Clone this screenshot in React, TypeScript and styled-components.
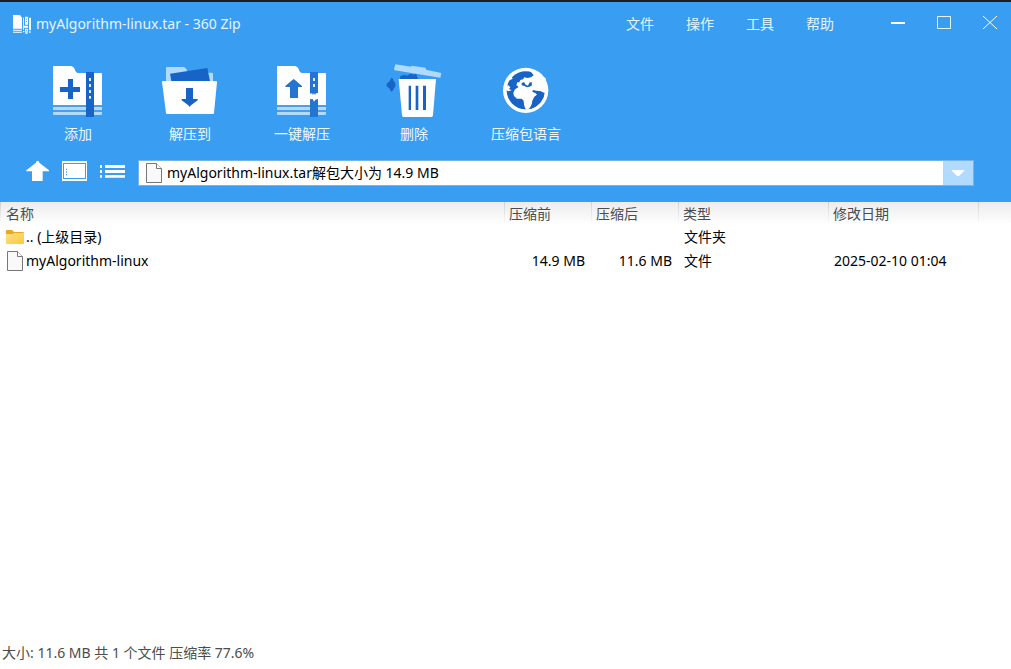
import React from "react";
import styled, { createGlobalStyle } from "styled-components";

const BLUE = "#399df2";
const DEEP = "#1763c6";
const PALE = "#b0dbff";

const GlobalStyle = createGlobalStyle`
  * { box-sizing: border-box; }
  html, body, #root { height: 100%; }
  body {
    margin: 0;
    background: #fff;
    font-family: "Noto Sans", "Noto Sans CJK SC", sans-serif;
    font-size: 14px;
    color: #000;
  }
  button, input { font: inherit; }
`;

const Window = styled.div`
  display: flex;
  flex-direction: column;
  min-height: 100%;
  border-top: 2px solid #1c1f22;
`;

const Header = styled.header`
  background: ${BLUE};
  color: #fff;
  padding-bottom: 16px;
`;

const TitleBar = styled.div`
  display: flex;
  align-items: center;
  height: 44px;
  padding-left: 12px;
`;

const Title = styled.h1`
  flex: 1;
  margin: 0 0 0 4px;
  font-size: 14px;
  font-weight: 400;
  line-height: 20px;
  color: #e6f4ff;
  white-space: nowrap;
`;

const FlatButton = styled.button`
  display: flex;
  align-items: center;
  justify-content: center;
  border: 0;
  padding: 0;
  background: transparent;
  color: inherit;
  cursor: pointer;
`;

const MenuBar = styled.nav`
  display: flex;
  margin-right: 25px;
`;

const MenuButton = styled(FlatButton)`
  height: 44px;
  padding: 0 16px 2px;
  color: #e6f4ff;
  white-space: nowrap;
`;

const WindowControls = styled.div`
  display: flex;
  gap: 2px;
`;

const WindowButton = styled(FlatButton)`
  width: 44px;
  height: 44px;
`;

const Toolbar = styled.div`
  display: flex;
  padding: 16px 0 14px 22px;
`;

const ToolButton = styled(FlatButton)`
  flex-direction: column;
  gap: 4px;
  width: 112px;
  line-height: 24px;
  color: #eef8ff;
  white-space: nowrap;
`;

const AddressRow = styled.div`
  display: flex;
  gap: 12px;
  padding: 0 37px 0 26px;
`;

const AddressField = styled.div`
  display: flex;
  flex: 1;
  align-items: center;
  height: 26px;
  padding-left: 6px;
  border: 1px solid #76b4e8;
  background: #fff;
`;

const AddressInput = styled.input`
  flex: 1;
  min-width: 0;
  height: 24px;
  margin-left: 4px;
  padding: 0 0 2px;
  border: 0;
  outline: 0;
  background: transparent;
  color: #000;
`;

const DropButton = styled(FlatButton)`
  width: 30px;
  height: 24px;
  background: ${PALE};
`;

const Main = styled.main`
  flex: 1;
`;

const FileTable = styled.table`
  width: 100%;
  table-layout: fixed;
  border-collapse: collapse;
`;

const HeadRow = styled.tr`
  height: 23px;
  background: linear-gradient(#ececec, #fff);
`;

const HeadCell = styled.th`
  padding: 0 0 0 5px;
  background: linear-gradient(#cfcfcf, #fff) left / 1px 100% no-repeat;
  font-weight: 400;
  line-height: 23px;
  text-align: left;
  color: #4c4c4c;
  white-space: nowrap;

  &:first-child {
    padding-left: 6px;
  }
`;

const Cell = styled.td<{ $align?: "right" }>`
  height: 24px;
  padding: 0 6px;
  line-height: 24px;
  text-align: ${(p) => p.$align ?? "left"};
  white-space: nowrap;
`;

const NameLabel = styled.span`
  display: flex;
  align-items: center;
  gap: 2px;
`;

const StatusBar = styled.footer`
  padding: 0 2px 4px;
  line-height: 24px;
  color: #4c4c4c;
`;

const Column = styled.col<{ $width?: number }>`
  width: ${(p) => (p.$width ? `${p.$width}px` : "auto")};
`;

const LogoIcon = () => (
  <svg width="20" height="22" viewBox="36 36 60 66" aria-hidden="true">
    <path fill="#fff" d="M39 42h21l6 8v33H39zM39 86h27v3H39zM39 92h27v3H39zM69 50h3v36h-3zM75 47h9v24h-9zM87 50h6v38h-6zM72 74h12v6H72zM75 83h9v9h-9zM69 90h4v4h-4zM87 91h5v4h-5zM76 94h7v4h-7z" />
    <path fill={BLUE} d="M78 53h3v3h-3zM78 60h3v3h-3zM78 86h3v3h-3z" />
  </svg>
);

const AddIcon = () => (
  <svg width="56" height="56" viewBox="60 36 168 168" aria-hidden="true">
    <path fill="#fff" d="M69 50q0-2 2-2h54l7 5 6 13 5 3h70q3 0 3 3v93H69z" />
    <path fill={PALE} d="M69 171h147v9H69zM69 186h147v6q0 3-3 3H72q-3 0-3-3z" />
    <path fill="#4b9ee8" d="M69 165h147v6H69zM69 180h147v6H69z" />
    <path fill={DEEP} d="M168 66h24v135h-24zM114 87h15v24h21v15h-21v21h-15v-21H90v-15h24z" />
    <path fill="#d8eeff" d="M177 84h6v9h-6zM177 102h6v9h-6zM177 120h6v9h-6zM177 138h6v8h-6z" />
  </svg>
);

const ExtractIcon = () => (
  <svg width="56" height="56" viewBox="396 36 168 168" aria-hidden="true">
    <path fill={PALE} d="M408 54q0-3 3-3h51l7 5 4 12h73q3 0 3 3v24H408z" />
    <path fill={DEEP} d="M420 71l112-17 8 39H424z" />
    <path fill="#fff" d="M396 96q0-3 3-3h159q3 0 3 3l-9 93q0 3-3 3H411q-3 0-3-3z" />
    <path fill={DEEP} d="M468 114h21v33h14v4l-20 15-4 5-4-5-20-15v-4h13z" />
  </svg>
);

const OneKeyIcon = () => (
  <svg width="56" height="56" viewBox="42 36 168 168" aria-hidden="true">
    <path fill="#fff" d="M51 50q0-2 2-2h54l7 5 6 13 5 3h70q3 0 3 3v93H51z" />
    <path fill={PALE} d="M51 171h147v9H51zM51 186h147v6q0 3-3 3H54q-3 0-3-3z" />
    <path fill="#4b9ee8" d="M51 165h147v6H51zM51 180h147v6H51z" />
    <path fill="#2475d2" d="M150 66h24v63l-6 1-3 5-3-6-3 6-3-5-6 1zM150 148l8-1 4 8 4-6 8-2v54h-24zM101 87l4 3 21 18v3h-12v33H90v-33H76v-3l21-18z" />
    <path fill="#d8eeff" d="M159 84h6v9h-6zM159 102h6v9h-6z" />
  </svg>
);

const DeleteIcon = () => (
  <svg width="56" height="56" viewBox="378 36 168 168" aria-hidden="true">
    <path fill={DEEP} d="M394 83l4 2 3 8 5 6v10l-5 7-3 7-5 2-4-9-9-7v-8l9-7zM420 87l1-9 12-4 7 3 12-6 8 3 8-3 3 7 3 9z" />
    <path fill={PALE} d="M406 43l47 7 2-3 42 6 1 6 46 10-3 14-137-22-2-3z" />
    <path fill="#fff" d="M416 87h112l-9 108q0 6-6 6h-82q-5 0-5-6z" />
    <path fill={DEEP} d="M446 107h7v73h-7zM467 107h8v73h-8zM489 107h9v73h-9z" />
  </svg>
);

const GlobeIcon = () => (
  <svg width="56" height="56" viewBox="9 6 168 168" aria-hidden="true">
    <circle cx="92" cy="91" r="68" fill="#fff" />
    <circle cx="92" cy="91" r="57" fill={DEEP} />
    <path
      fill="#fff"
      d="M106 32L152 54L156 98L145 98L138 94L124 92L114 90L112 95L122 100L126 104L118 110L112 122L110 134L104 144L96 150L90 144L87 134L86 122L80 116L66 116L57 108L55 98L60 88L70 82L68 78L64 76L67 67L73 67L76 60L84 58L88 52L98 54L108 52L116 46Z"
    />
    <path fill={DEEP} d="M80 69L87 66L92 74L99 77L103 68L110 66L111 76L104 80L96 82L88 78L80 76Z" />
    <path fill={DEEP} d="M124 94L138 96L148 99L146 112L136 128L122 140L106 148L110 134L118 114L128 104Z" />
    <path fill="#fff" d="M32 78L40 76L46 82L42 87L50 91L40 94L33 90ZM43 54L50 50L53 56L46 60Z" />
  </svg>
);

const UpIcon = () => (
  <svg width="24" height="26" viewBox="78 30 72 78" aria-hidden="true">
    <path fill="#fff" d="M110 33h6l2 5 29 23v3h-19v29H96V64H79v-3l29-23z" />
  </svg>
);

const ViewIcon = () => (
  <svg width="26" height="26" viewBox="186 30 78 78" aria-hidden="true">
    <path fill="#fff" d="M186 33h75v60h-75z" />
    <path fill={BLUE} d="M189 39h69v3h-69zM189 84h69v3h-69zM189 39h3v48h-3zM255 39h3v48h-3zM198 56h3v4h-3zM198 64h3v4h-3zM198 72h3v4h-3z" />
  </svg>
);

const ListIcon = () => (
  <svg width="26" height="26" viewBox="300 30 78 78" aria-hidden="true">
    <path fill="#fff" d="M300 45h6v9h-6zM300 60h6v9h-6zM300 75h6v8h-6zM315 45h60v9h-60zM315 60h60v9h-60zM315 75h60v8h-60z" />
  </svg>
);

const FileIcon = () => (
  <svg width="18" height="20" viewBox="-1 0 18 20" aria-hidden="true">
    <path fill="#f9f9f9" stroke="#777" d="M.5.5h10l5 5v14H.5z" />
    <path fill="#fff" stroke="#777" d="M10.500.5v5h5" />
  </svg>
);

const FolderIcon = () => (
  <svg width="18" height="16" viewBox="0 0 18 16" aria-hidden="true">
    <defs>
      <linearGradient id="folder" x1="0" y1="0" x2="1" y2="1">
        <stop offset="0" stopColor="#ffe08a" />
        <stop offset="1" stopColor="#fbc937" />
      </linearGradient>
    </defs>
    <path fill="#e8a820" d="M0 2q0-1 1-1h5l2 2h9q1 0 1 1v3H0z" />
    <path fill="url(#folder)" d="M0 5h7l1-1h10v10q0 1-1 1H1q-1 0-1-1z" />
  </svg>
);

const menus = ["文件", "操作", "工具", "帮助"];

const tools = [
  { label: "添加", Icon: AddIcon },
  { label: "解压到", Icon: ExtractIcon },
  { label: "一键解压", Icon: OneKeyIcon },
  { label: "删除", Icon: DeleteIcon },
  { label: "压缩包语言", Icon: GlobeIcon },
];

const columns = [
  { label: "名称", width: 504 },
  { label: "压缩前", width: 87 },
  { label: "压缩后", width: 87 },
  { label: "类型", width: 150 },
  { label: "修改日期", width: 150 },
];

const files = [
  { name: ".. (上级目录)", Icon: FolderIcon, size: "", packed: "", type: "文件夹", date: "" },
  { name: "myAlgorithm-linux", Icon: FileIcon, size: "14.9 MB", packed: "11.6 MB", type: "文件", date: "2025-02-10 01:04" },
];

export default function App() {
  return (
    <Window>
      <GlobalStyle />
      <Header>
        <TitleBar>
          <LogoIcon />
          <Title>myAlgorithm-linux.tar - 360 Zip</Title>
          <MenuBar>
            {menus.map((m) => (
              <MenuButton key={m}>{m}</MenuButton>
            ))}
          </MenuBar>
          <WindowControls>
            <WindowButton aria-label="最小化">
              <svg width="16" height="16" viewBox="0 0 16 16">
                <path fill="#fff" d="M2 6h14v2H2z" />
              </svg>
            </WindowButton>
            <WindowButton aria-label="最大化">
              <svg width="16" height="16" viewBox="0 0 16 16">
                <path fill="none" stroke="#e6f4ff" d="M2.500.5h13v12h-13z" />
              </svg>
            </WindowButton>
            <WindowButton aria-label="关闭">
              <svg width="16" height="16" viewBox="0 0 16 16">
                <path fill="none" stroke="#fff" d="M2 0l14 13M16 0L2 13" />
              </svg>
            </WindowButton>
          </WindowControls>
        </TitleBar>
        <Toolbar>
          {tools.map(({ label, Icon }) => (
            <ToolButton key={label}>
              <Icon />
              {label}
            </ToolButton>
          ))}
        </Toolbar>
        <AddressRow>
          <FlatButton aria-label="上级目录">
            <UpIcon />
          </FlatButton>
          <FlatButton aria-label="视图">
            <ViewIcon />
          </FlatButton>
          <FlatButton aria-label="列表">
            <ListIcon />
          </FlatButton>
          <AddressField>
            <FileIcon />
            <AddressInput aria-label="路径" defaultValue="myAlgorithm-linux.tar解包大小为 14.9 MB" />
            <DropButton aria-label="展开">
              <svg width="12" height="8" viewBox="0 0 12 8">
                <path fill="#fff" d="M0 1h12v1L7 7H5L0 2z" />
              </svg>
            </DropButton>
          </AddressField>
        </AddressRow>
      </Header>
      <Main>
        <FileTable>
          <colgroup>
            {columns.map((c) => (
              <Column key={c.label} $width={c.width} />
            ))}
            <Column />
          </colgroup>
          <thead>
            <HeadRow>
              {columns.map((c) => (
                <HeadCell key={c.label} scope="col">
                  {c.label}
                </HeadCell>
              ))}
              <HeadCell as="td" />
            </HeadRow>
          </thead>
          <tbody>
            {files.map(({ name, Icon, size, packed, type, date }) => (
              <tr key={name}>
                <Cell>
                  <NameLabel>
                    <Icon />
                    {name}
                  </NameLabel>
                </Cell>
                <Cell $align="right">{size}</Cell>
                <Cell $align="right">{packed}</Cell>
                <Cell>{type}</Cell>
                <Cell>{date}</Cell>
                <Cell />
              </tr>
            ))}
          </tbody>
        </FileTable>
      </Main>
      <StatusBar>大小: 11.6 MB 共 1 个文件 压缩率 77.6%</StatusBar>
    </Window>
  );
}
